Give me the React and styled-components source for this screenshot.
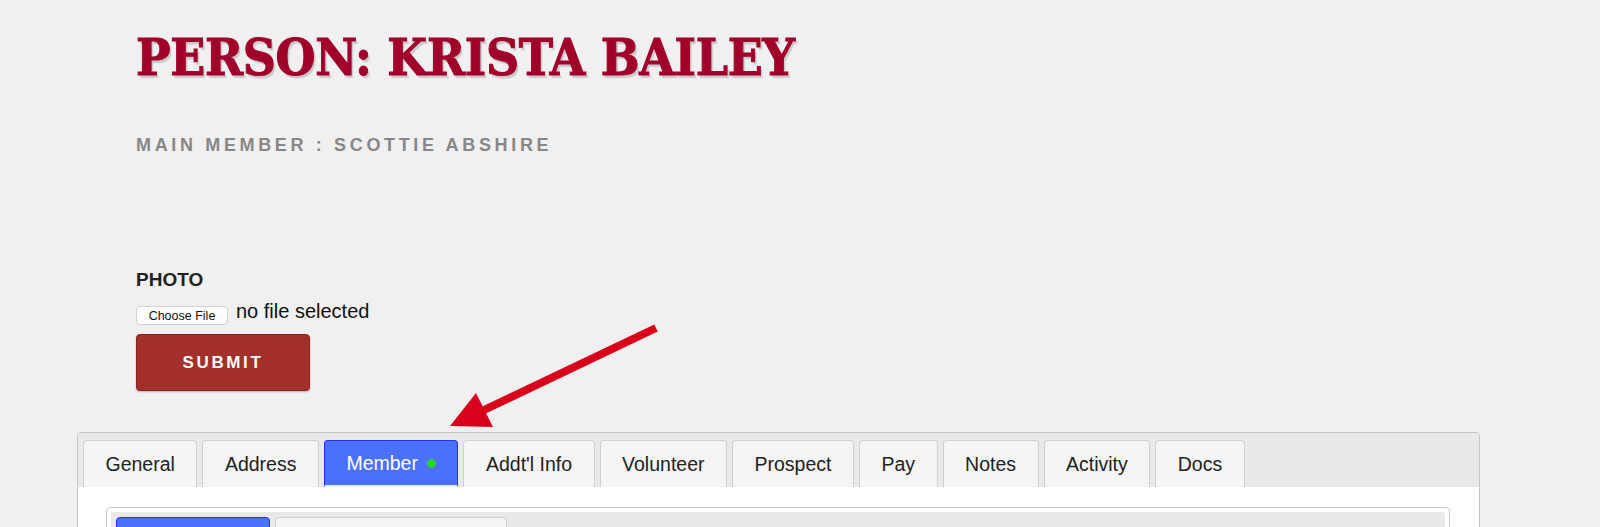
import React from "react";
import styled, { createGlobalStyle } from "styled-components";

const GlobalStyle = createGlobalStyle`
    body {
        margin: 0;
        background: #f0f0f0;
        font-family: "Liberation Sans", Arial, sans-serif;
    }
`;

const Page = styled.div`
    position: relative;
    padding-bottom: 40px;
`;

const Head = styled.div`
    padding: 27px 0 0 136px;
`;

const Title = styled.h1`
    margin: 0;
    font-family: "DejaVu Serif Condensed", "DejaVu Serif", serif;
    font-stretch: condensed;
    font-weight: bold;
    font-size: 51px;
    line-height: 60px;
    letter-spacing: -0.3px;
    color: #a1002b;
    -webkit-text-stroke: 1px #a1002b;
    text-shadow: 2px 3px 1px rgba(0, 0, 0, 0.16);
`;

const Sub = styled.div`
    margin-top: 48px;
    font-size: 18px;
    font-weight: bold;
    letter-spacing: 3.65px;
    color: #878787;
`;

const Form = styled.div`
    padding-top: 113px;
`;

const Label = styled.div`
    font-size: 19px;
    font-weight: bold;
    color: #222;
    line-height: 22px;
`;

const FileRow = styled.div`
    display: flex;
    align-items: flex-end;
    gap: 8px;
    margin-top: 9px;
`;

const ChooseButton = styled.button`
    width: 92px;
    height: 19px;
    padding: 0;
    background: #fff;
    border: 1px solid #d2d2d2;
    border-radius: 4px;
    font-family: "Liberation Sans", Arial, sans-serif;
    font-size: 12.5px;
    color: #111;
`;

const FileName = styled.span`
    font-size: 20px;
    line-height: 22px;
    color: #111;
    margin-bottom: 3px;
`;

const Submit = styled.button`
    display: block;
    margin-top: 9px;
    width: 174px;
    height: 57px;
    background: #a3302a;
    border: 1px solid #8c231e;
    border-radius: 4px;
    box-shadow: 0 1px 2px rgba(0, 0, 0, 0.25);
    color: #fff;
    font-family: "Liberation Sans", Arial, sans-serif;
    font-size: 17px;
    font-weight: bold;
    letter-spacing: 2.6px;
`;

const Arrow = styled.svg`
    position: absolute;
    left: 440px;
    top: 318px;
`;

const Panel = styled.div`
    margin: 41px 0 0 77px;
    width: 1401px;
    border: 1px solid #c5c5c5;
    border-radius: 4px;
    background: #fff;
    overflow: hidden;
`;

const TabBar = styled.div`
    display: flex;
    gap: 5px;
    padding: 7px 5px 0;
    background: #e9e9e9;
`;

const Tab = styled.div`
    display: flex;
    align-items: center;
    height: 47px;
    box-sizing: border-box;
    padding: 0 21.5px;
    border: 1px solid ${p => (p.$active ? "#2b2bff" : "#cfcfcf")};
    border-bottom: ${p => (p.$active ? "2px solid #e8eeff" : "none")};
    border-radius: 4px 4px 0 0;
    background: ${p => (p.$active ? "#4a72ff" : "#f5f5f5")};
    color: ${p => (p.$active ? "#fff" : "#222")};
    font-size: 19.5px;
`;

const Dot = styled.span`
    width: 9px;
    height: 9px;
    margin-left: 9px;
    border-radius: 50%;
    background: #27d327;
`;

const Content = styled.div`
    padding: 20px 29px 30px 28px;
`;

const Inner = styled.div`
    border: 1px solid #c8c8c8;
    border-radius: 4px;
    padding: 4px;
`;

const InnerBar = styled.div`
    display: flex;
    gap: 5px;
    padding: 5px 5px 0;
    background: #e9e9e9;
    border-radius: 3px;
`;

const InnerTab = styled.div`
    width: ${p => p.$w}px;
    height: 40px;
    box-sizing: border-box;
    border: 1px solid ${p => (p.$active ? "#2b2bff" : "#cfcfcf")};
    border-radius: 4px 4px 0 0;
    background: ${p => (p.$active ? "#4a72ff" : "#f5f5f5")};
`;

const tabs = [
    { label: "General" },
    { label: "Address" },
    { label: "Member", active: true, dot: true },
    { label: "Addt'l Info" },
    { label: "Volunteer" },
    { label: "Prospect" },
    { label: "Pay" },
    { label: "Notes" },
    { label: "Activity" },
    { label: "Docs" },
];

export default function App() {
    return (
        <Page>
            <GlobalStyle />
            <Head>
                <Title>PERSON: KRISTA BAILEY</Title>
                <Sub>MAIN MEMBER : SCOTTIE ABSHIRE</Sub>
                <Form>
                    <Label>PHOTO</Label>
                    <FileRow>
                        <ChooseButton>Choose File</ChooseButton>
                        <FileName>no file selected</FileName>
                    </FileRow>
                    <Submit>SUBMIT</Submit>
                </Form>
            </Head>
            <Arrow width="225" height="115" viewBox="0 0 225 115">
                <line x1="216" y1="10" x2="44" y2="92" stroke="#d9001b" strokeWidth="8" />
                <polygon points="10,108 36,75 53,109" fill="#d9001b" />
            </Arrow>
            <Panel>
                <TabBar>
                    {tabs.map(t => (
                        <Tab key={t.label} $active={t.active}>
                            {t.label}
                            {t.dot && <Dot />}
                        </Tab>
                    ))}
                </TabBar>
                <Content>
                    <Inner>
                        <InnerBar>
                            <InnerTab $active $w={154} />
                            <InnerTab $w={232} />
                        </InnerBar>
                    </Inner>
                </Content>
            </Panel>
        </Page>
    );
}
